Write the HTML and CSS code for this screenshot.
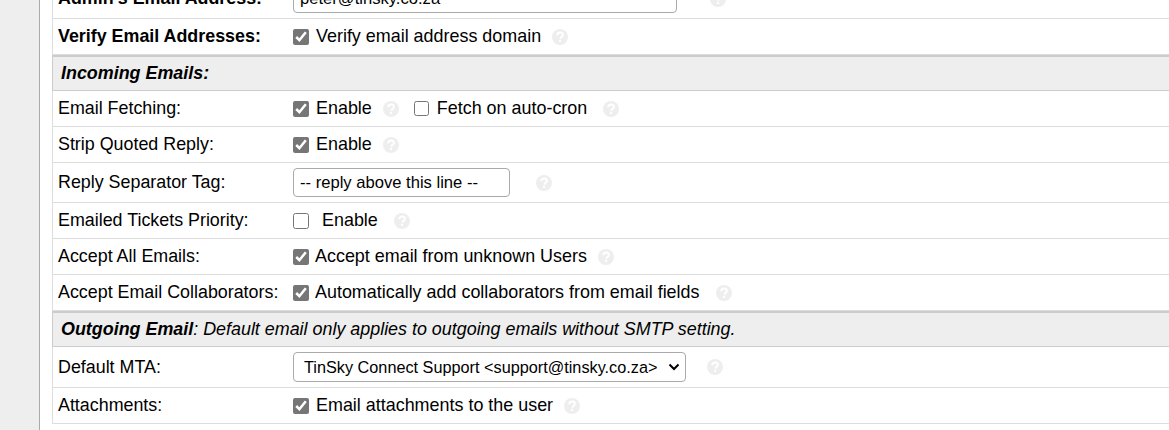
FILE: index.html
```html
<!DOCTYPE html>
<html lang="en">
<head>
<meta charset="utf-8">
<title>Email Settings</title>
<link rel="stylesheet" href="styles.css">
</head>
<body>
<svg class="defs" width="0" height="0" aria-hidden="true">
  <symbol id="help" viewBox="0 0 16 16">
    <circle cx="8" cy="8" r="8" fill="#eeeeee"/>
    <path d="M5.2 6.2C5.3 4.5 6.5 3.4 8.1 3.4c1.6 0 2.8 1 2.8 2.4 0 1.1-.6 1.6-1.4 2.1-.7.5-.9.8-.9 1.5v.3" fill="none" stroke="#fff" stroke-width="2"/>
    <rect x="7" y="10.8" width="2.1" height="2.1" fill="#fff"/>
  </symbol>
</svg>
<div class="page">
  <div class="rail"></div>
  <main class="content">
    <div class="form">
      <div class="row row-40">
        <div class="label strong">Admin's Email Address:</div>
        <div class="field">
          <input class="text text-admin" type="text" value="peter@tinsky.co.za">
          <svg class="help help-33"><use href="#help"/></svg>
        </div>
      </div>
      <div class="row row-36">
        <div class="label strong">Verify Email Addresses:</div>
        <div class="field">
          <input class="check" type="checkbox" checked>
          <span class="opt">Verify email address domain</span>
          <svg class="help help-11"><use href="#help"/></svg>
        </div>
      </div>
      <div class="section"><b>Incoming Emails:</b></div>
      <div class="row row-36">
        <div class="label">Email Fetching:</div>
        <div class="field">
          <input class="check" type="checkbox" checked>
          <span class="opt">Enable</span>
          <svg class="help help-11"><use href="#help"/></svg>
          <input class="check check-2" type="checkbox">
          <span class="opt opt-fetch">Fetch on auto-cron</span>
          <svg class="help help-16"><use href="#help"/></svg>
        </div>
      </div>
      <div class="row row-36">
        <div class="label">Strip Quoted Reply:</div>
        <div class="field">
          <input class="check" type="checkbox" checked>
          <span class="opt">Enable</span>
          <svg class="help help-11"><use href="#help"/></svg>
        </div>
      </div>
      <div class="row row-40">
        <div class="label">Reply Separator Tag:</div>
        <div class="field">
          <input class="text text-tag" type="text" value="-- reply above this line --">
          <svg class="help help-26"><use href="#help"/></svg>
        </div>
      </div>
      <div class="row row-36">
        <div class="label">Emailed Tickets Priority:</div>
        <div class="field">
          <input class="check" type="checkbox">
          <span class="opt opt-wide">Enable</span>
          <svg class="help help-16"><use href="#help"/></svg>
        </div>
      </div>
      <div class="row row-36">
        <div class="label">Accept All Emails:</div>
        <div class="field">
          <input class="check" type="checkbox" checked>
          <span class="opt opt-tight">Accept email from unknown Users</span>
          <svg class="help help-11"><use href="#help"/></svg>
        </div>
      </div>
      <div class="row row-36">
        <div class="label">Accept Email Collaborators:</div>
        <div class="field">
          <input class="check" type="checkbox" checked>
          <span class="opt opt-tight">Automatically add collaborators from email fields</span>
          <svg class="help help-16"><use href="#help"/></svg>
        </div>
      </div>
      <div class="section"><b>Outgoing Email</b>: Default email only applies to outgoing emails without SMTP setting.</div>
      <div class="row row-41">
        <div class="label">Default MTA:</div>
        <div class="field">
          <select class="select"><option>TinSky Connect Support &lt;support@tinsky.co.za&gt;</option></select>
          <svg class="help help-21"><use href="#help"/></svg>
        </div>
      </div>
      <div class="row row-36">
        <div class="label">Attachments:</div>
        <div class="field">
          <input class="check" type="checkbox" checked>
          <span class="opt">Email attachments to the user</span>
          <svg class="help help-11"><use href="#help"/></svg>
        </div>
      </div>
    </div>
  </main>
</div>
</body>
</html>
```
FILE: styles.css
```css
* { box-sizing: border-box; }
html, body { margin: 0; height: 100%; overflow: hidden; background: #fff; }
body { font-family: "Liberation Sans", Arial, sans-serif; font-size: 17.87px; color: #000; }
.defs { position: absolute; }
.page { display: flex; height: 430px; overflow: hidden; }
.rail { width: 40px; flex: none; background: #eee; border-right: 1px solid #aaa; }
.content { flex: 1; padding-left: 12px; min-width: 0; margin-top: -21px; }
.form { width: 1140px; border-left: 1px solid #ddd; }
.row { display: flex; align-items: center; border-bottom: 1px solid #ddd; padding-left: 5px; }
.row-36 { height: 36px; }
.row-40 { height: 40px; }
.row-41 { height: 41px; }
.label { width: 235px; flex: none; }
.strong { font-weight: 700; }
.field { display: flex; align-items: center; }
.check { width: 16px; height: 16px; margin: 0; accent-color: #767676; flex: none; }
.check-2 { width: 15px; height: 15px; margin-left: 15px; }
.opt { margin-left: 7px; font-size: 17.93px; }
.opt-fetch { margin-left: 8px; }
.opt-wide { margin-left: 13px; }
.opt-tight { margin-left: 6px; }
.text { height: 29px; font: 16.6px "Liberation Sans", Arial, sans-serif; border: 1px solid #aaa; border-radius: 4px; padding: 0 6px; background: #fff; color: #000; }
.text-admin { width: 384px; }
.text-tag { width: 217px; }
.select { appearance: none; width: 393px; height: 30px; font: 16.25px "Liberation Sans", Arial, sans-serif; border: 1px solid #aaa; border-radius: 4px; color: #000; padding-left: 10px; background: #fff url("data:image/svg+xml,%3Csvg xmlns='http://www.w3.org/2000/svg' width='12' height='8' viewBox='0 0 12 8'%3E%3Cpath d='M1.5 1.5 6 6l4.5-4.5' fill='none' stroke='%23000' stroke-width='2'/%3E%3C/svg%3E") no-repeat 374px center; }
.help { width: 16px; height: 16px; flex: none; }
.help-11 { margin-left: 11px; }
.help-16 { margin-left: 16px; }
.help-21 { margin-left: 21px; }
.help-26 { margin-left: 26px; }
.help-33 { margin-left: 33px; }
.section { height: 36px; display: flex; align-items: center; white-space: pre-wrap; background: #eee; border: 1px solid #ccc; border-width: 2px 0 1px 1px; margin-left: -1px; padding-left: 8px; font-style: italic; font-size: 17.9px; }
```
